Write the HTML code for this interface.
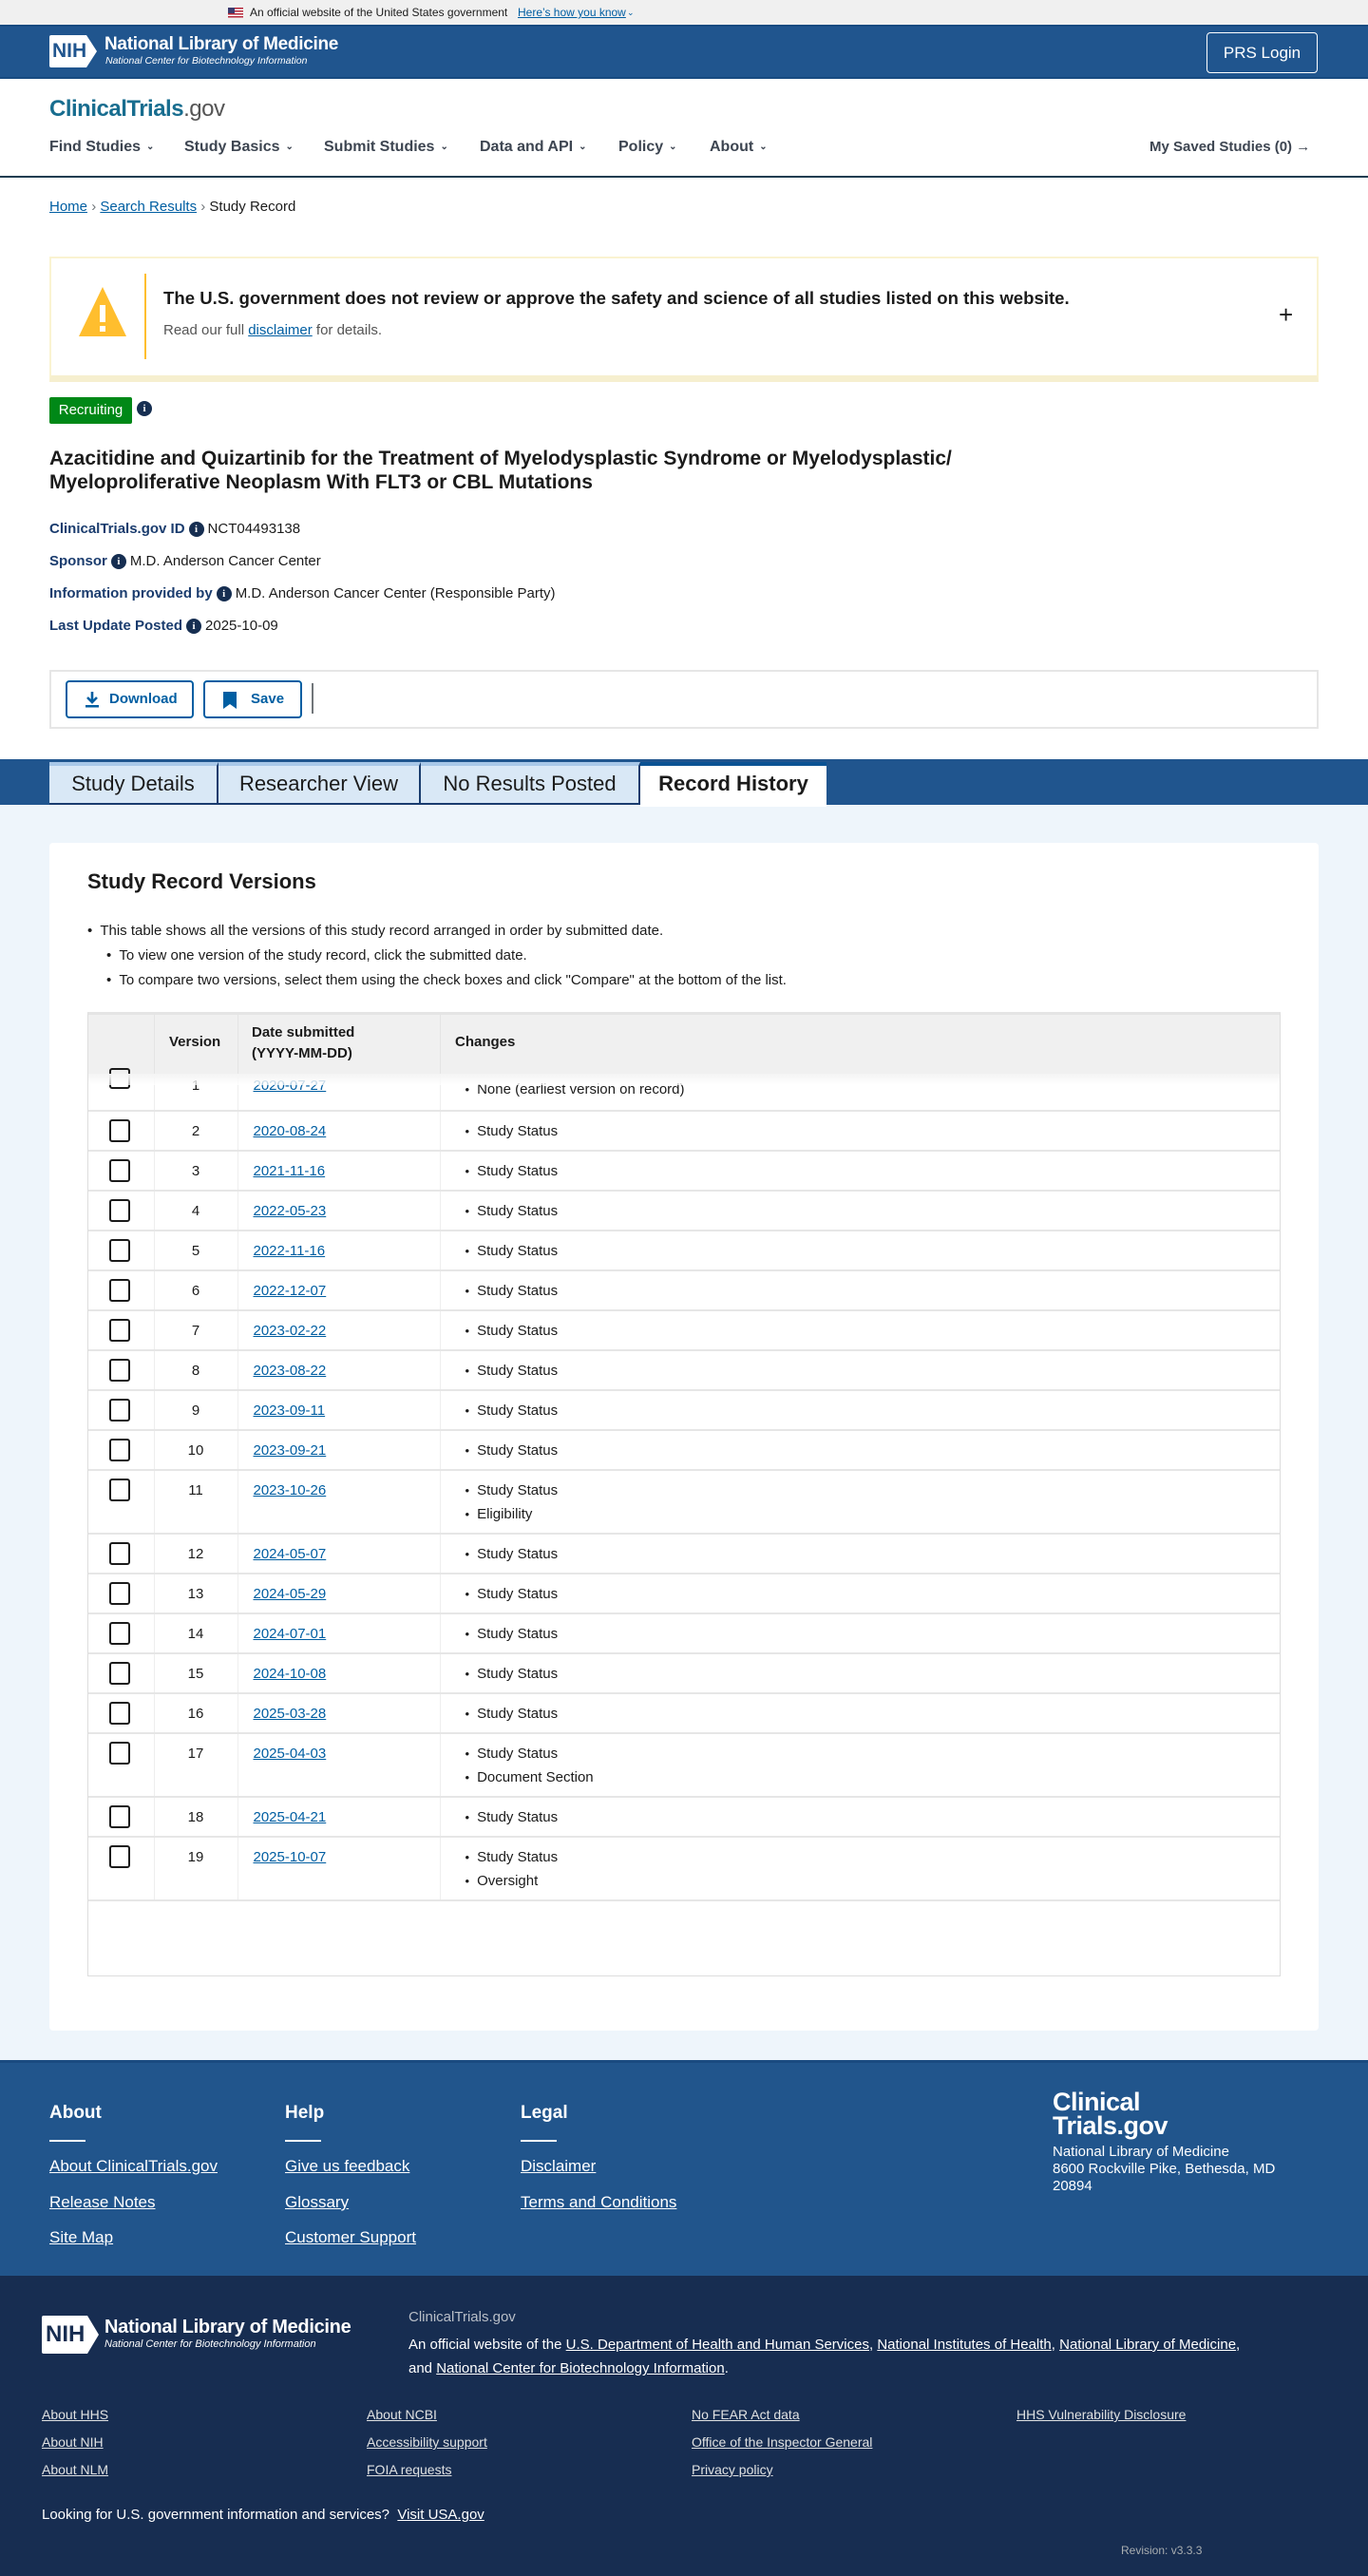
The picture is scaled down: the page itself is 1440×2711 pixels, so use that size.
<!DOCTYPE html>
<html><head><meta charset="utf-8">
<style>
*{box-sizing:border-box;margin:0;padding:0}
body{width:1440px;height:2711px;position:relative;font-family:"Liberation Sans",Arial,sans-serif;color:#1b1b1b;background:#fff;overflow:hidden}
.abs{position:absolute}
a{color:#005ea2;text-decoration:underline}
.gov{top:0;left:0;width:1440px;height:26px;background:#f0f0f0;font-size:12px;line-height:26px}
.nihbar{top:26px;left:0;width:1440px;height:57px;background:#20558e;border-top:2px solid #174a80;border-bottom:2px solid #174a80}
.nav{font-size:16px;font-weight:bold;color:#3d4551;top:146px}
.chev{font-size:10px;margin-left:6px;position:relative;top:-2px}
.meta{left:52px;font-size:15px;color:#1b1b1b}
.meta b{color:#1a3c6e}
.ic{display:inline-block;width:16px;height:16px;border-radius:50%;background:#162e51;color:#fff;font-size:11px;font-weight:bold;text-align:center;line-height:16px;vertical-align:1px;margin:0 4px 0 4px;font-family:"Liberation Serif",serif}
.tab{top:802px;height:45px;background:#d9e8f6;border-top:4px solid #a9c8e8;font-size:22px;line-height:38px;text-align:center;color:#1b1b1b;border-right:2px solid #1a3c6e;border-bottom:2px solid #1a3c6e}
table{border-collapse:collapse;width:1255px;font-size:15px}
td{border-bottom:2px solid #e6e6e6;vertical-align:top;padding-top:12px}
td.c1{width:69px;border-right:1px solid #eee}
td.c2{width:88px;border-right:1px solid #eee;text-align:center}
td.c3{width:213px;border-right:1px solid #eee;padding-left:16px}
td.c4{padding-left:28px}
.cb{display:block;width:22px;height:24px;border:2px solid #1b1b1b;border-radius:3px;margin-left:22px;margin-top:-4px}
tr{height:42px}
tr.t{height:67px}
td ul{list-style:none}
td li{line-height:25px}
td li:first-child{margin-top:-4px}
td li:before{content:"•";margin-right:8px;margin-left:-2px;font-size:13px}
.fl{color:#fff;font-size:17px}
.fl2{color:#dfe1e2;font-size:14px}
</style></head><body>

<div class="abs gov"><span style="position:absolute;left:240px;top:8px;width:16px;height:11px;background:repeating-linear-gradient(#b22234 0 1.5px,#fff 1.5px 3px)"><span style="position:absolute;left:0;top:0;width:7px;height:6px;background:#3c3b6e"></span></span><span style="position:absolute;left:263px">An official website of the United States government</span><span style="position:absolute;left:545px;color:#005ea2;text-decoration:underline">Here’s how you know</span><span style="position:absolute;left:660px;color:#005ea2;font-size:9px">⌄</span></div>

<div class="abs nihbar">
 <div class="abs" style="left:52px;top:9px;width:50px;height:34px;background:#fff;border-radius:2px;color:#20558e;font-size:21px;font-weight:bold;line-height:34px;padding-left:3px;clip-path:polygon(0 0,78% 0,100% 50%,78% 100%,0 100%)">NIH</div>
 <div class="abs" style="left:110px;top:8px;color:#fff;font-size:19px;font-weight:bold;letter-spacing:-0.3px">National Library of Medicine</div>
 <div class="abs" style="left:111px;top:30px;color:#fff;font-size:10.5px;font-style:italic">National Center for Biotechnology Information</div>
 <div class="abs" style="left:1270px;top:6px;width:117px;height:43px;border:1px solid #fff;border-radius:4px;color:#fff;font-size:17px;text-align:center;line-height:41px">PRS Login</div>
</div>

<div class="abs" style="left:52px;top:101px;font-size:24px;font-weight:bold;letter-spacing:-0.5px"><span style="color:#186d8f">ClinicalTrials</span><span style="color:#555;font-weight:normal">.gov</span></div>
<div class="abs nav" style="left:52px">Find Studies<span class="chev">⌄</span></div>
<div class="abs nav" style="left:194px">Study Basics<span class="chev">⌄</span></div>
<div class="abs nav" style="left:341px">Submit Studies<span class="chev">⌄</span></div>
<div class="abs nav" style="left:505px">Data and API<span class="chev">⌄</span></div>
<div class="abs nav" style="left:651px">Policy<span class="chev">⌄</span></div>
<div class="abs nav" style="left:747px">About<span class="chev">⌄</span></div>
<div class="abs nav" style="left:1210px;font-size:15px">My Saved Studies (0) →</div>
<div class="abs" style="left:0;top:185px;width:1440px;height:2px;background:#1a3c50"></div>

<div class="abs" style="left:52px;top:209px;font-size:15px"><a href="#">Home</a> <span style="color:#71767a">›</span> <a href="#">Search Results</a> <span style="color:#71767a">›</span> Study Record</div>

<div class="abs" style="left:52px;top:270px;width:1336px;height:132px;border:2px solid #faf3d1;border-bottom:7px solid #f6efcf;background:#fff">
 <div class="abs" style="left:29px;top:30px;width:0;height:0;border-left:25px solid transparent;border-right:25px solid transparent;border-bottom:52px solid #ffbe2e"></div>
 <div class="abs" style="left:51px;top:49px;width:6px;height:18px;background:#fff"></div>
 <div class="abs" style="left:51px;top:71px;width:6px;height:6px;background:#fff"></div>
 <div class="abs" style="left:98px;top:16px;width:2px;height:90px;background:#ffbe2e"></div>
 <div class="abs" style="left:118px;top:31px;font-size:18.6px;font-weight:bold">The U.S. government does not review or approve the safety and science of all studies listed on this website.</div>
 <div class="abs" style="left:118px;top:67px;font-size:15px;color:#555">Read our full <a href="#">disclaimer</a> for details.</div>
 <div class="abs" style="left:1292px;top:44px;font-size:26px">+</div>
</div>

<div class="abs" style="left:52px;top:418px;width:87px;height:28px;background:#008817;color:#fff;font-size:15px;line-height:28px;text-align:center;border-radius:2px">Recruiting</div>
<span class="abs ic" style="left:144px;top:422px;margin:0">i</span>

<div class="abs" style="left:52px;top:470px;font-size:21px;font-weight:bold;line-height:25px;color:#1b1b1b">Azacitidine and Quizartinib for the Treatment of Myelodysplastic Syndrome or Myelodysplastic/<br>Myeloproliferative Neoplasm With FLT3 or CBL Mutations</div>

<div class="abs meta" style="top:548px"><b>ClinicalTrials.gov ID</b><span class="ic">i</span>NCT04493138</div>
<div class="abs meta" style="top:582px"><b>Sponsor</b><span class="ic">i</span>M.D. Anderson Cancer Center</div>
<div class="abs meta" style="top:616px"><b>Information provided by</b><span class="ic">i</span>M.D. Anderson Cancer Center (Responsible Party)</div>
<div class="abs meta" style="top:650px"><b>Last Update Posted</b><span class="ic">i</span>2025-10-09</div>

<div class="abs" style="left:52px;top:705px;width:1336px;height:62px;border:2px solid #e6e6e6">
 <div class="abs" style="left:15px;top:9px;width:135px;height:40px;border:2px solid #005ea2;border-radius:4px;color:#005ea2;font-weight:bold;font-size:15px;line-height:36px;padding-left:44px">Download
  <svg class="abs" style="left:18px;top:9px" width="16" height="18" viewBox="0 0 16 18"><path d="M8 1v10M3 7l5 5 5-5" stroke="#005ea2" stroke-width="2.6" fill="none"/><rect x="1" y="15" width="14" height="2.5" fill="#005ea2"/></svg></div>
 <div class="abs" style="left:160px;top:9px;width:104px;height:40px;border:2px solid #005ea2;border-radius:4px;color:#005ea2;font-weight:bold;font-size:15px;line-height:36px;padding-left:48px">Save
  <svg class="abs" style="left:19px;top:10px" width="14" height="18" viewBox="0 0 14 18"><path d="M0 0h14v18l-7-5-7 5z" fill="#005ea2"/></svg></div>
 <div class="abs" style="left:274px;top:12px;width:2px;height:32px;background:#71767a"></div>
</div>

<div class="abs" style="left:0;top:799px;width:1440px;height:48px;background:#20558e"></div>
<div class="abs" style="left:0;top:847px;width:1440px;height:1864px;background:#eef5fb"></div>
<div class="abs tab" style="left:52px;width:178px">Study Details</div>
<div class="abs tab" style="left:230px;width:213px">Researcher View</div>
<div class="abs tab" style="left:443px;width:231px">No Results Posted</div>
<div class="abs" style="left:674px;top:802px;width:196px;height:47px;background:#fff;border-top:4px solid #0b5394;font-size:22px;font-weight:bold;line-height:38px;text-align:center">Record History</div>

<div class="abs" style="left:52px;top:887px;width:1336px;height:1250px;background:#fff;border-radius:4px">
 <div class="abs" style="left:40px;top:28px;font-size:22px;font-weight:bold">Study Record Versions</div>
 <div class="abs" style="left:40px;top:80px;font-size:15px;line-height:26px">
  <div>•&nbsp; This table shows all the versions of this study record arranged in order by submitted date.</div>
  <div style="padding-left:20px">•&nbsp; To view one version of the study record, click the submitted date.</div>
  <div style="padding-left:20px">•&nbsp; To compare two versions, select them using the check boxes and click "Compare" at the bottom of the list.</div>
 </div>
 <div class="abs" style="left:40px;top:178px;width:1256px;height:1015px;border:1px solid #ddd;border-top:3px solid #e4e4e4;overflow:hidden">
  <div style="height:62px;background:#f0f0f0;position:relative;font-size:15px;font-weight:bold">
   <div class="abs" style="left:85px;top:20px">Version</div>
   <div class="abs" style="left:172px;top:8px;line-height:22px">Date submitted<br>(YYYY-MM-DD)</div>
   <div class="abs" style="left:386px;top:20px">Changes</div>
   <div class="abs" style="left:69px;top:0;width:1px;height:62px;background:#e4e4e4"></div>
   <div class="abs" style="left:157px;top:0;width:1px;height:62px;background:#e4e4e4"></div>
   <div class="abs" style="left:370px;top:0;width:1px;height:62px;background:#e4e4e4"></div>
  </div>
  <div style="height:12px;background:linear-gradient(#f4f4f4,rgba(255,255,255,.7));position:relative;z-index:2"></div>
  <table style="position:relative;top:-12px">
   <tr style="height:39px"><td class="c1" style="padding-top:0"><span class="cb" style="height:22px;margin-top:-6px"></span></td><td class="c2" style="padding-top:4px">1</td><td class="c3" style="padding-top:4px"><a href="#">2020-07-27</a></td><td class="c4" style="padding-top:8px"><ul><li>None (earliest version on record)</li></ul></td></tr>
   <tr><td class="c1"><span class="cb"></span></td><td class="c2">2</td><td class="c3"><a href="#">2020-08-24</a></td><td class="c4"><ul><li>Study Status</li></ul></td></tr>
   <tr><td class="c1"><span class="cb"></span></td><td class="c2">3</td><td class="c3"><a href="#">2021-11-16</a></td><td class="c4"><ul><li>Study Status</li></ul></td></tr>
   <tr><td class="c1"><span class="cb"></span></td><td class="c2">4</td><td class="c3"><a href="#">2022-05-23</a></td><td class="c4"><ul><li>Study Status</li></ul></td></tr>
   <tr><td class="c1"><span class="cb"></span></td><td class="c2">5</td><td class="c3"><a href="#">2022-11-16</a></td><td class="c4"><ul><li>Study Status</li></ul></td></tr>
   <tr><td class="c1"><span class="cb"></span></td><td class="c2">6</td><td class="c3"><a href="#">2022-12-07</a></td><td class="c4"><ul><li>Study Status</li></ul></td></tr>
   <tr><td class="c1"><span class="cb"></span></td><td class="c2">7</td><td class="c3"><a href="#">2023-02-22</a></td><td class="c4"><ul><li>Study Status</li></ul></td></tr>
   <tr><td class="c1"><span class="cb"></span></td><td class="c2">8</td><td class="c3"><a href="#">2023-08-22</a></td><td class="c4"><ul><li>Study Status</li></ul></td></tr>
   <tr><td class="c1"><span class="cb"></span></td><td class="c2">9</td><td class="c3"><a href="#">2023-09-11</a></td><td class="c4"><ul><li>Study Status</li></ul></td></tr>
   <tr><td class="c1"><span class="cb"></span></td><td class="c2">10</td><td class="c3"><a href="#">2023-09-21</a></td><td class="c4"><ul><li>Study Status</li></ul></td></tr>
   <tr class="t"><td class="c1"><span class="cb"></span></td><td class="c2">11</td><td class="c3"><a href="#">2023-10-26</a></td><td class="c4"><ul><li>Study Status</li><li>Eligibility</li></ul></td></tr>
   <tr><td class="c1"><span class="cb"></span></td><td class="c2">12</td><td class="c3"><a href="#">2024-05-07</a></td><td class="c4"><ul><li>Study Status</li></ul></td></tr>
   <tr><td class="c1"><span class="cb"></span></td><td class="c2">13</td><td class="c3"><a href="#">2024-05-29</a></td><td class="c4"><ul><li>Study Status</li></ul></td></tr>
   <tr><td class="c1"><span class="cb"></span></td><td class="c2">14</td><td class="c3"><a href="#">2024-07-01</a></td><td class="c4"><ul><li>Study Status</li></ul></td></tr>
   <tr><td class="c1"><span class="cb"></span></td><td class="c2">15</td><td class="c3"><a href="#">2024-10-08</a></td><td class="c4"><ul><li>Study Status</li></ul></td></tr>
   <tr><td class="c1"><span class="cb"></span></td><td class="c2">16</td><td class="c3"><a href="#">2025-03-28</a></td><td class="c4"><ul><li>Study Status</li></ul></td></tr>
   <tr class="t"><td class="c1"><span class="cb"></span></td><td class="c2">17</td><td class="c3"><a href="#">2025-04-03</a></td><td class="c4"><ul><li>Study Status</li><li>Document Section</li></ul></td></tr>
   <tr><td class="c1"><span class="cb"></span></td><td class="c2">18</td><td class="c3"><a href="#">2025-04-21</a></td><td class="c4"><ul><li>Study Status</li></ul></td></tr>
   <tr class="t"><td class="c1"><span class="cb"></span></td><td class="c2">19</td><td class="c3"><a href="#">2025-10-07</a></td><td class="c4"><ul><li>Study Status</li><li>Oversight</li></ul></td></tr>
  </table>
 </div>
</div>

<div class="abs" style="left:0;top:2168px;width:1440px;height:227px;background:#21558c;border-top:3px solid #1a4a80">
 <div class="abs fl" style="left:52px;top:42px;font-weight:bold;font-size:19px">About</div>
 <div class="abs fl" style="left:300px;top:42px;font-weight:bold;font-size:19px">Help</div>
 <div class="abs fl" style="left:548px;top:42px;font-weight:bold;font-size:19px">Legal</div>
 <div class="abs" style="left:52px;top:81px;width:38px;height:2px;background:#fff"></div>
 <div class="abs" style="left:300px;top:81px;width:38px;height:2px;background:#fff"></div>
 <div class="abs" style="left:548px;top:81px;width:38px;height:2px;background:#fff"></div>
 <div class="abs fl" style="left:52px;top:99px"><a style="color:#fff" href="#">About ClinicalTrials.gov</a></div>
 <div class="abs fl" style="left:52px;top:137px"><a style="color:#fff" href="#">Release Notes</a></div>
 <div class="abs fl" style="left:52px;top:174px"><a style="color:#fff" href="#">Site Map</a></div>
 <div class="abs fl" style="left:300px;top:99px"><a style="color:#fff" href="#">Give us feedback</a></div>
 <div class="abs fl" style="left:300px;top:137px"><a style="color:#fff" href="#">Glossary</a></div>
 <div class="abs fl" style="left:300px;top:174px"><a style="color:#fff" href="#">Customer Support</a></div>
 <div class="abs fl" style="left:548px;top:99px"><a style="color:#fff" href="#">Disclaimer</a></div>
 <div class="abs fl" style="left:548px;top:137px"><a style="color:#fff" href="#">Terms and Conditions</a></div>
 <div class="abs" style="left:1108px;top:29px;color:#fff;font-size:27px;font-weight:bold;line-height:25px;letter-spacing:-0.5px">Clinical<br>Trials.gov</div>
 <div class="abs" style="left:1108px;top:85px;color:#fff;font-size:15px;line-height:18px">National Library of Medicine<br>8600 Rockville Pike, Bethesda, MD<br>20894</div>
</div>

<div class="abs" style="left:0;top:2395px;width:1440px;height:316px;background:#172d51">
 <div class="abs" style="left:44px;top:42px;width:60px;height:40px;background:#fff;border-radius:2px;color:#172d51;font-size:24px;font-weight:bold;line-height:40px;padding-left:4px;clip-path:polygon(0 0,80% 0,100% 50%,80% 100%,0 100%)">NIH</div>
 <div class="abs" style="left:110px;top:43px;color:#fff;font-size:20px;font-weight:bold;letter-spacing:-0.3px">National Library of Medicine</div>
 <div class="abs" style="left:110px;top:66px;color:#fff;font-size:11px;font-style:italic">National Center for Biotechnology Information</div>
 <div class="abs" style="left:430px;top:35px;color:#b9bfc8;font-size:15px">ClinicalTrials.gov</div>
 <div class="abs" style="left:430px;top:60px;color:#fff;font-size:15px;line-height:25px">An official website of the <a style="color:#fff" href="#">U.S. Department of Health and Human Services</a>, <a style="color:#fff" href="#">National Institutes of Health</a>, <a style="color:#fff" href="#">National Library of Medicine</a>,<br>and <a style="color:#fff" href="#">National Center for Biotechnology Information</a>.</div>
 <div class="abs fl2" style="left:44px;top:138px"><a style="color:#dfe1e2" href="#">About HHS</a></div>
 <div class="abs fl2" style="left:44px;top:167px"><a style="color:#dfe1e2" href="#">About NIH</a></div>
 <div class="abs fl2" style="left:44px;top:196px"><a style="color:#dfe1e2" href="#">About NLM</a></div>
 <div class="abs fl2" style="left:386px;top:138px"><a style="color:#dfe1e2" href="#">About NCBI</a></div>
 <div class="abs fl2" style="left:386px;top:167px"><a style="color:#dfe1e2" href="#">Accessibility support</a></div>
 <div class="abs fl2" style="left:386px;top:196px"><a style="color:#dfe1e2" href="#">FOIA requests</a></div>
 <div class="abs fl2" style="left:728px;top:138px"><a style="color:#dfe1e2" href="#">No FEAR Act data</a></div>
 <div class="abs fl2" style="left:728px;top:167px"><a style="color:#dfe1e2" href="#">Office of the Inspector General</a></div>
 <div class="abs fl2" style="left:728px;top:196px"><a style="color:#dfe1e2" href="#">Privacy policy</a></div>
 <div class="abs fl2" style="left:1070px;top:138px"><a style="color:#dfe1e2" href="#">HHS Vulnerability Disclosure</a></div>
 <div class="abs" style="left:44px;top:243px;color:#fff;font-size:15px">Looking for U.S. government information and services?&nbsp; <a style="color:#fff" href="#">Visit USA.gov</a></div>
 <div class="abs" style="left:1180px;top:282px;color:#a9aeb1;font-size:12px">Revision: v3.3.3</div>
</div>
</body></html>
